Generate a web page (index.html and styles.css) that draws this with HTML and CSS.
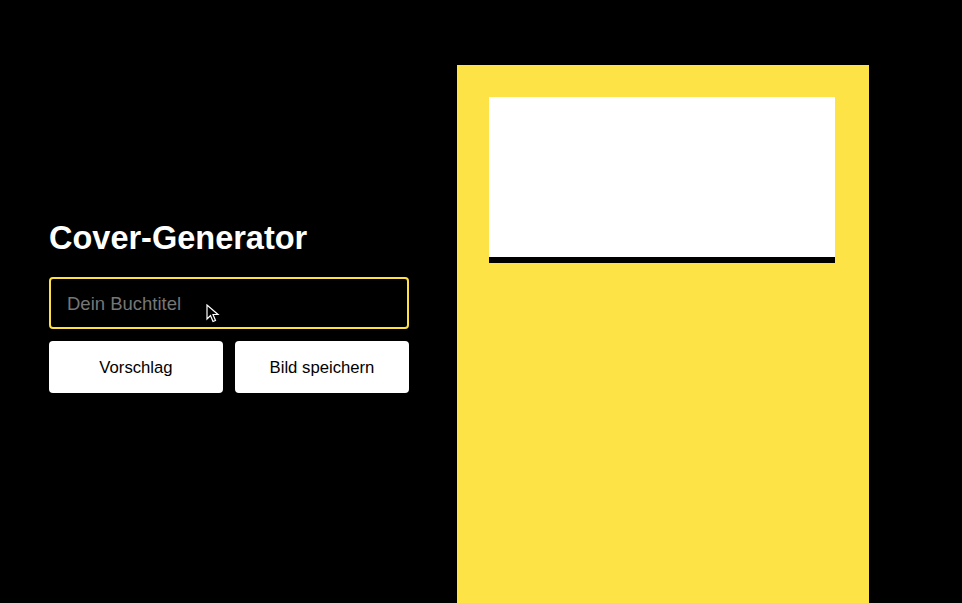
FILE: index.html
```html
<!DOCTYPE html>
<html lang="de">
<head>
<meta charset="utf-8">
<title>Cover-Generator</title>
<link rel="stylesheet" href="styles.css">
</head>
<body>
<main class="app">
  <section class="controls">
    <h1 class="title">Cover-Generator</h1>
    <div class="field">
      <input class="title-input" type="text" placeholder="Dein Buchtitel">
      <svg class="cursor" width="14" height="20" viewBox="0 0 14 20" aria-hidden="true">
        <path d="M1 1 L1 15 L4.5 11.5 L7 17.5 L9.5 16.5 L7 10.5 L12 10.5 Z" fill="#000" stroke="#fff" stroke-width="1.2" stroke-linejoin="miter"/>
      </svg>
    </div>
    <div class="buttons">
      <button class="btn" type="button">Vorschlag</button>
      <button class="btn" type="button">Bild speichern</button>
    </div>
  </section>
  <section class="cover">
    <div class="cover-title"></div>
  </section>
</main>
</body>
</html>
```

FILE: styles.css
```css
* { box-sizing: border-box; }
html, body {
  margin: 0;
  padding: 0;
  background: #000;
  height: 100%;
  overflow: hidden;
}
body {
  font-family: "Liberation Sans", Arial, sans-serif;
  color: #fff;
}
.app {
  display: flex;
  align-items: flex-start;
  gap: 48px;
  padding: 65px 0 0 49px;
  height: 100%;
  overflow: hidden;
}
.controls {
  width: 360px;
  margin-top: 155px;
  display: flex;
  flex-direction: column;
}
.title {
  margin: 0 0 21px 0;
  font-size: 32.5px;
  line-height: 36px;
  font-weight: 700;
  letter-spacing: 0;
}
.field {
  position: relative;
}
.title-input {
  display: block;
  width: 360px;
  height: 52px;
  background: #000;
  border: 2px solid #fde046;
  border-radius: 4px;
  padding: 2px 16px 0 16px;
  font-family: "Liberation Sans", Arial, sans-serif;
  font-size: 18.5px;
  color: #fff;
  outline: none;
}
.title-input::placeholder {
  color: #767676;
}
.cursor {
  position: absolute;
  left: 157px;
  top: 27px;
}
.buttons {
  display: flex;
  gap: 12px;
  margin-top: 12px;
}
.btn {
  flex: 1;
  height: 52px;
  background: #fff;
  border: none;
  border-radius: 4px;
  font-family: "Liberation Sans", Arial, sans-serif;
  font-size: 16.7px;
  color: #000;
  padding: 1px 0 0 0;
}
.cover {
  flex: none;
  width: 412px;
  height: 620px;
  background: #fde346;
  padding: 32px 34px 0 32px;
}
.cover-title {
  height: 166px;
  background: #fff;
  border-bottom: 6px solid #000;
}
```
